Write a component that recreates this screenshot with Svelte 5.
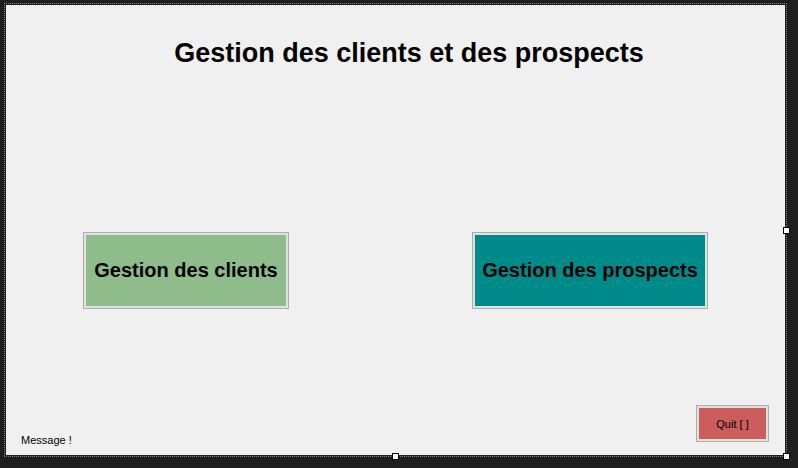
<script>
  let message = $state('Message !');
</script>

<main class="surface">
  <div class="selection">
    <div class="form">
      <h1>Gestion des clients et des prospects</h1>
      <nav class="choices">
        <button type="button" class="clients" onclick={() => (message = 'Gestion des clients')}>Gestion des clients</button>
        <button type="button" class="prospects" onclick={() => (message = 'Gestion des prospects')}>Gestion des prospects</button>
      </nav>
      <footer>
        <output>{message}</output>
        <button type="button" class="quit">Quit [ ]</button>
      </footer>
    </div>
    <span class="handle right"></span>
    <span class="handle bottom"></span>
    <span class="handle corner"></span>
  </div>
</main>

<style>
  :global(body) {
    margin: 0;
    background: #1e1e1e;
  }

  .surface {
    box-sizing: border-box;
    min-height: 100vh;
    padding: 3px 11px 11px 4px;
    display: flex;
    background: #1e1e1e;
    color: #000;
    font-family: 'Liberation Sans', Arial, sans-serif;
  }

  .selection {
    position: relative;
    flex: 1;
    display: flex;
    padding: 2px;
    background:
      repeating-linear-gradient(90deg, #808080 0 1px, #1e1e1e 1px 2px) top / 100% 1px no-repeat,
      repeating-linear-gradient(90deg, #808080 0 1px, #1e1e1e 1px 2px) bottom / 100% 1px no-repeat,
      repeating-linear-gradient(180deg, #808080 0 1px, #1e1e1e 1px 2px) left / 1px 100% no-repeat,
      repeating-linear-gradient(180deg, #808080 0 1px, #1e1e1e 1px 2px) right / 1px 100% no-repeat;
  }

  .form {
    flex: 1;
    display: flex;
    flex-direction: column;
    justify-content: space-between;
    padding: 32px 16px 13px 15px;
    background: #f0f0f0;
  }

  h1 {
    margin: 0;
    padding-left: 28px;
    font-size: 27px;
    line-height: 32px;
    font-weight: 700;
    text-align: center;
  }

  .choices {
    display: flex;
    justify-content: space-between;
    padding: 66px 61px 0 62px;
  }

  button {
    margin: 0;
    padding: 0 6px;
    border: 1px solid #adadad;
    box-shadow: inset 0 0 0 2px #e1e1e1;
    border-radius: 0;
    color: #000;
    font-family: inherit;
    white-space: nowrap;
  }

  .choices button {
    height: 77px;
    font-size: 20px;
    font-weight: 700;
  }

  .clients {
    width: 206px;
    background: #8fbc8b;
  }

  .prospects {
    width: 236px;
    background: #008b8b;
  }

  footer {
    display: flex;
    justify-content: space-between;
    align-items: flex-end;
    height: 37px;
    font-size: 11px;
  }

  output {
    line-height: 12px;
    margin-bottom: -4px;
  }

  .quit {
    width: 73px;
    height: 37px;
    background: #cd5c5c;
    font-size: 11px;
  }

  .handle {
    position: absolute;
    box-sizing: border-box;
    width: 7px;
    height: 7px;
    border: 1px solid #000;
    background: #fff;
  }

  .right {
    right: -3px;
    top: calc(50% - 3px);
  }

  .bottom {
    bottom: -3px;
    left: calc(50% - 4px);
  }

  .corner {
    right: -3px;
    bottom: -3px;
  }
</style>
